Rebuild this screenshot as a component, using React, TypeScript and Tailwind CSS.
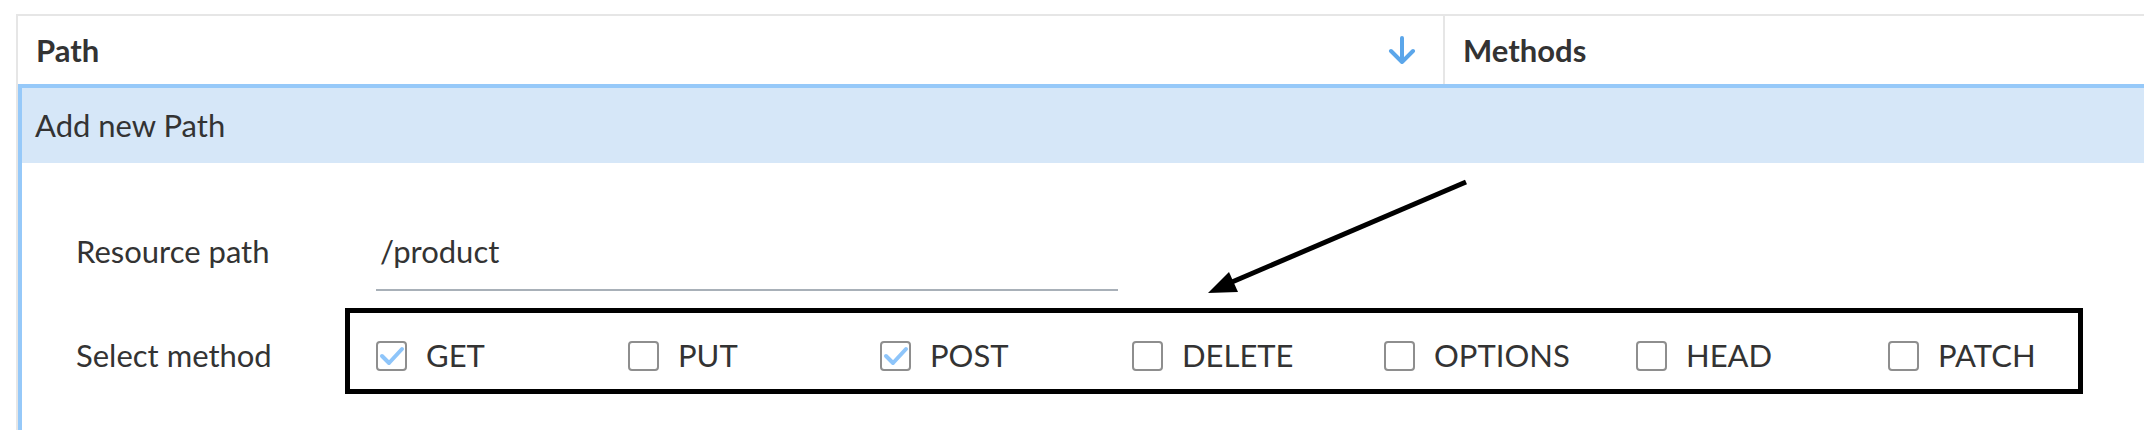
import React from 'react';

const methods = [
  { name: 'GET', checked: true },
  { name: 'PUT', checked: false },
  { name: 'POST', checked: true },
  { name: 'DELETE', checked: false },
  { name: 'OPTIONS', checked: false },
  { name: 'HEAD', checked: false },
  { name: 'PATCH', checked: false },
];

const Checkbox: React.FC<{ checked: boolean }> = ({ checked }) => (
  <div className="w-[31px] h-[30px] shrink-0 rounded-[4px] border-2 border-[#8e8e8e] bg-white flex items-center justify-center">
    {checked && (
      <svg width="27" height="26" viewBox="0 0 27 26" fill="none">
        <path d="M4 13l7 7L24 6" stroke="#8ec5fa" strokeWidth="4" strokeLinecap="round" strokeLinejoin="round" />
      </svg>
    )}
  </div>
);

const App: React.FC = () => {
  return (
    <div className="relative w-[2144px] h-[430px] overflow-hidden bg-white pt-[14px] pl-[16px] text-[#333333] font-['Lato',sans-serif]">
      <div className="border-t-2 border-l-2 border-[#e6e6e6]">
        {/* header */}
        <div className="flex h-[68px] items-stretch">
          <div className="w-[1425px] flex items-center justify-between pl-[18px] pr-[27px]">
            <span className="text-[31px] leading-[37px] font-bold">Path</span>
            <svg width="28" height="28" viewBox="0 0 28 28" fill="none">
              <path d="M14 2v24M3 15l11 11 11-11" stroke="#5ba6ea" strokeWidth="4" strokeLinecap="round" strokeLinejoin="round" />
            </svg>
          </div>
          <div className="border-l-2 border-[#e6e6e6] flex items-center pl-[18px]">
            <span className="text-[31px] leading-[37px] font-bold">Methods</span>
          </div>
        </div>

        {/* new path row */}
        <div className="border-t-4 border-l-4 border-[#96c9f9]">
          <div className="h-[75px] bg-[#d6e7f8] flex items-center pl-[13px]">
            <span className="text-[31px] leading-[37px]">Add new Path</span>
          </div>
          <div className="pt-[70px] pl-[54px] h-[290px]">
            <div className="flex items-start">
              <div className="w-[300px] text-[31px] leading-[37px]">Resource path</div>
              <div className="w-[742px] pb-[19px] border-b-2 border-[#a8b0b8] pl-[4px] text-[31px] leading-[37px]">
                /product
              </div>
            </div>
            <div className="flex items-center mt-[46px]">
              <div className="w-[300px] text-[31px] leading-[37px]">Select method</div>
              <div className="relative flex">
                {methods.map((m) => (
                  <label key={m.name} className="w-[252px] flex items-center gap-[19px]">
                    <Checkbox checked={m.checked} />
                    <span className="text-[31px] leading-[37px]">{m.name}</span>
                  </label>
                ))}
                <div className="absolute left-[-31px] top-[-29px] w-[1738px] h-[86px] border-[5px] border-black pointer-events-none" />
              </div>
            </div>
          </div>
        </div>
      </div>

      {/* annotation arrow */}
      <svg className="absolute left-0 top-0 pointer-events-none" width="2144" height="430" viewBox="0 0 2144 430">
        <line x1="1466" y1="182" x2="1232" y2="282" stroke="#000" strokeWidth="5" />
        <polygon points="1208,293 1238,292 1229,272" fill="#000" />
      </svg>
    </div>
  );
};

export default App;
